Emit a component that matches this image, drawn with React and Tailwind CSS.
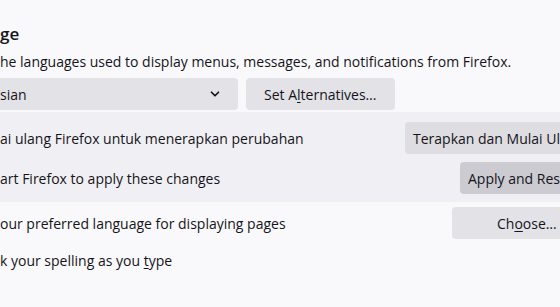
import { ChevronDown } from "lucide-react";

const Btn = ({ children, className = "" }) => (
    <div className={`h-[32px] flex items-center rounded-[4px] whitespace-nowrap ${className}`}>{children}</div>
);

const App = () => {
    return (
        <div className="w-[560px] h-[307px] overflow-hidden bg-[#f9f9fb] text-[#15141a] text-[14px] font-['Open_Sans',sans-serif]">
            <div className="pt-[22px]">
                <h2 className="text-[17px] font-semibold leading-[24px]">ge</h2>
                <p className="mt-[6px] leading-[20px] whitespace-nowrap">he languages used to display menus, messages, and notifications from Firefox.</p>
                <div className="mt-[6px] flex items-center gap-[8px]">
                    <div className="w-[238px] h-[32px] bg-[#e3e3e7] rounded-r-[4px] flex items-center justify-between pr-[16px]">
                        <span>sian</span>
                        <ChevronDown size={14} strokeWidth={3} />
                    </div>
                    <Btn className="w-[149px] pl-[18px] bg-[#e3e3e7]">
                        Set A<u className="underline-offset-2">l</u>ternatives…
                    </Btn>
                </div>
            </div>

            <div className="mt-[2px] bg-[#f0f0f4] pt-[10px] pb-[8px] flex flex-col gap-[8px]">
                <div className="flex items-center justify-between">
                    <span className="whitespace-nowrap">ai ulang Firefox untuk menerapkan perubahan</span>
                    <Btn className="w-[155px] pl-[8px] shrink-0 bg-[#dddde2] rounded-r-none overflow-hidden">Terapkan dan Mulai Ulang</Btn>
                </div>
                <div className="flex items-center justify-between">
                    <span className="whitespace-nowrap">art Firefox to apply these changes</span>
                    <Btn className="w-[100px] pl-[8px] shrink-0 bg-[#cbcbd1] rounded-r-none overflow-hidden">Apply and Restart</Btn>
                </div>
            </div>

            <div className="mt-[5px] flex items-center justify-between">
                <span className="whitespace-nowrap">our preferred language for displaying pages</span>
                <Btn className="w-[108px] pl-[45px] shrink-0 bg-[#e3e3e7] rounded-r-none">
                    Ch<u className="underline-offset-2">o</u>ose…
                </Btn>
            </div>

            <div className="mt-[12px] leading-[20px] whitespace-nowrap">
                k your spelling as you <u className="underline-offset-2">t</u>ype
            </div>
        </div>
    );
};

export default App;
